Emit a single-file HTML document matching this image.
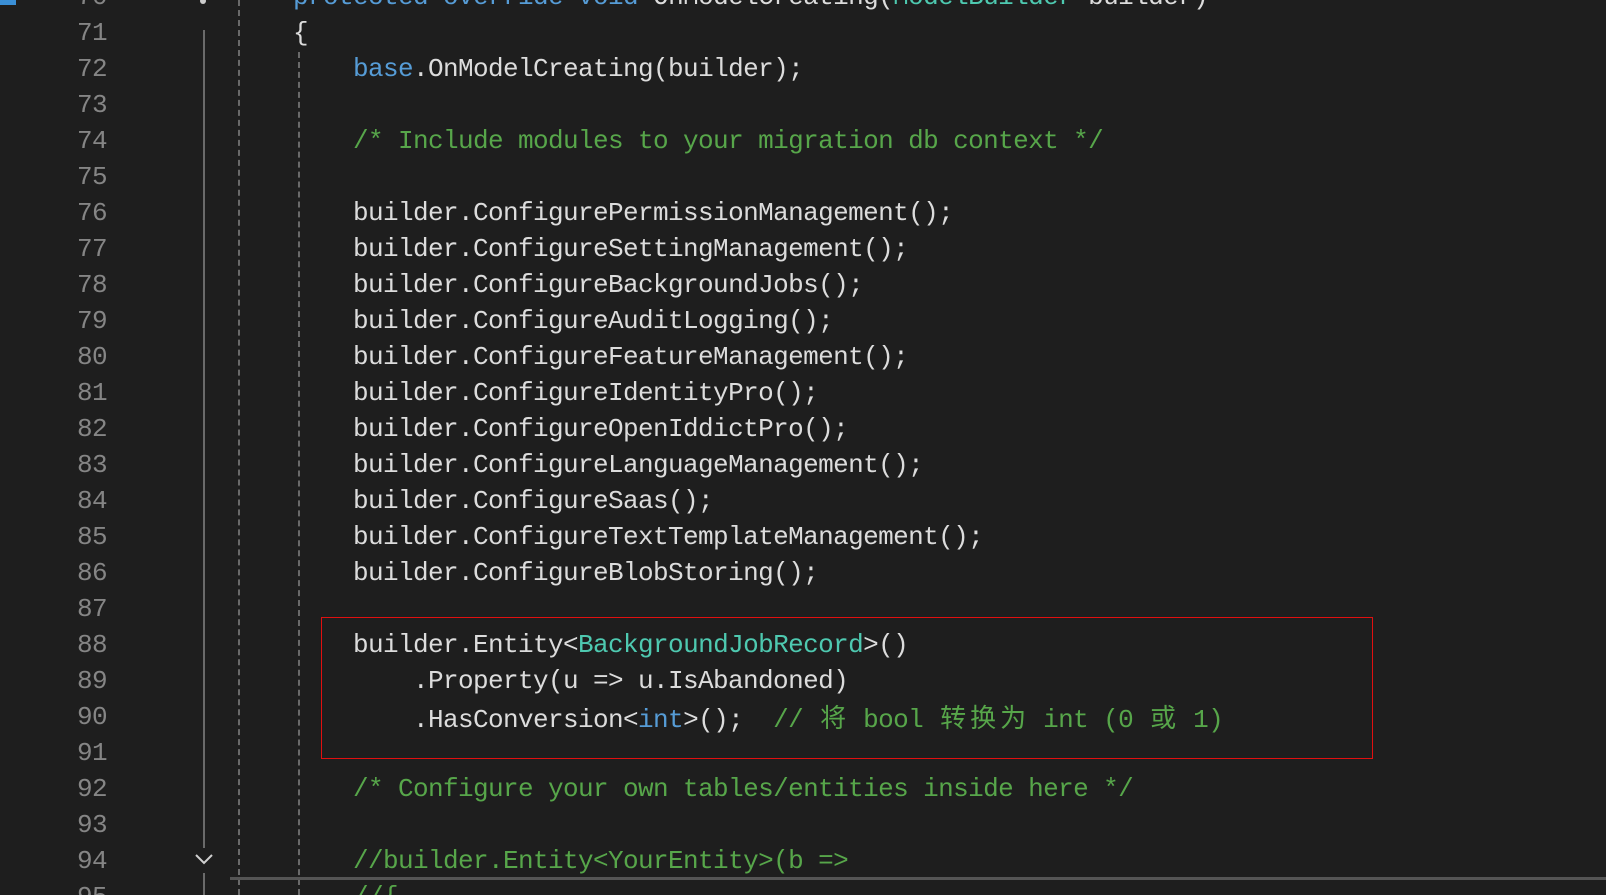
<!DOCTYPE html>
<html><head><meta charset="utf-8"><style>
html,body{margin:0;padding:0;background:#1e1e1e;width:1606px;height:895px;overflow:hidden;position:relative}
.l{position:absolute;left:0;height:36px;line-height:36px;font-family:"Liberation Mono","Noto Sans CJK SC",monospace;font-size:26px;letter-spacing:-0.6px;white-space:pre;color:#dcdcdc}
.n{position:absolute;left:40px;width:67px;text-align:right;height:36px;line-height:36px;font-family:"Liberation Mono",monospace;font-size:26px;letter-spacing:-0.6px;color:#858585}
.k{color:#569cd6}.t{color:#4ec9b0}.c{color:#57a64a}
.cj{display:inline-block;width:30px;text-align:center;font-family:"Noto Sans CJK SC",sans-serif;font-size:26px;letter-spacing:0}
.dash{position:absolute;width:0;border-left:2px dashed #6a6a6a}
</style></head><body>
<div style="position:absolute;left:0;top:0;width:16px;height:5px;background:#3a8fd6"></div>
<div style="position:absolute;left:203px;top:30px;width:2px;height:818px;background:#6a6a6a"></div>
<div style="position:absolute;left:203px;top:873px;width:2px;height:22px;background:#6a6a6a"></div>
<div style="position:absolute;left:200px;top:-2px;width:6px;height:6px;border-radius:50%;background:#ccc"></div>
<svg style="position:absolute;left:194px;top:852px" width="20" height="14"><path d="M2 3 L10 11 L18 3" stroke="#d0d0d0" stroke-width="2" fill="none"/></svg>
<div class="dash" style="left:238px;top:0;height:895px"></div>
<div class="dash" style="left:298px;top:52px;height:843px"></div>
<div style="position:absolute;left:230px;top:877px;width:1376px;height:3px;background:#555"></div>
<div style="position:absolute;left:321px;top:617px;width:1050px;height:140px;border:1.5px solid #e01010"></div>

<div class="n" style="top:-21px">70</div><div class="l k" style="left:293px;top:-21px">protected override void <span style="color:#dcdcdc">OnModelCreating(</span><span class="t">ModelBuilder</span><span style="color:#dcdcdc"> builder)</span></div>
<div class="n" style="top:15px">71</div><div class="l" style="left:293px;top:15px">{</div>
<div class="n" style="top:51px">72</div><div class="l" style="left:353px;top:51px"><span class="k">base</span>.OnModelCreating(builder);</div>
<div class="n" style="top:87px">73</div>
<div class="n" style="top:123px">74</div><div class="l c" style="left:353px;top:123px">/* Include modules to your migration db context */</div>
<div class="n" style="top:159px">75</div>
<div class="n" style="top:195px">76</div><div class="l" style="left:353px;top:195px">builder.ConfigurePermissionManagement();</div>
<div class="n" style="top:231px">77</div><div class="l" style="left:353px;top:231px">builder.ConfigureSettingManagement();</div>
<div class="n" style="top:267px">78</div><div class="l" style="left:353px;top:267px">builder.ConfigureBackgroundJobs();</div>
<div class="n" style="top:303px">79</div><div class="l" style="left:353px;top:303px">builder.ConfigureAuditLogging();</div>
<div class="n" style="top:339px">80</div><div class="l" style="left:353px;top:339px">builder.ConfigureFeatureManagement();</div>
<div class="n" style="top:375px">81</div><div class="l" style="left:353px;top:375px">builder.ConfigureIdentityPro();</div>
<div class="n" style="top:411px">82</div><div class="l" style="left:353px;top:411px">builder.ConfigureOpenIddictPro();</div>
<div class="n" style="top:447px">83</div><div class="l" style="left:353px;top:447px">builder.ConfigureLanguageManagement();</div>
<div class="n" style="top:483px">84</div><div class="l" style="left:353px;top:483px">builder.ConfigureSaas();</div>
<div class="n" style="top:519px">85</div><div class="l" style="left:353px;top:519px">builder.ConfigureTextTemplateManagement();</div>
<div class="n" style="top:555px">86</div><div class="l" style="left:353px;top:555px">builder.ConfigureBlobStoring();</div>
<div class="n" style="top:591px">87</div>
<div class="n" style="top:627px">88</div><div class="l" style="left:353px;top:627px">builder.Entity&lt;<span class="t">BackgroundJobRecord</span>&gt;()</div>
<div class="n" style="top:663px">89</div><div class="l" style="left:413px;top:663px">.Property(u =&gt; u.IsAbandoned)</div>
<div class="n" style="top:699px">90</div><div class="l" style="left:413px;top:699px">.HasConversion&lt;<span class="k">int</span>&gt;();  <span class="c">// <span class="cj">将</span> bool <span class="cj">转</span><span class="cj">换</span><span class="cj">为</span> int (0 <span class="cj">或</span> 1)</span></div>
<div class="n" style="top:735px">91</div>
<div class="n" style="top:771px">92</div><div class="l c" style="left:353px;top:771px">/* Configure your own tables/entities inside here */</div>
<div class="n" style="top:807px">93</div>
<div class="n" style="top:843px">94</div><div class="l c" style="left:353px;top:843px">//builder.Entity&lt;YourEntity&gt;(b =&gt;</div>
<div class="n" style="top:879px">95</div><div class="l c" style="left:353px;top:879px">//{</div>
</body></html>
